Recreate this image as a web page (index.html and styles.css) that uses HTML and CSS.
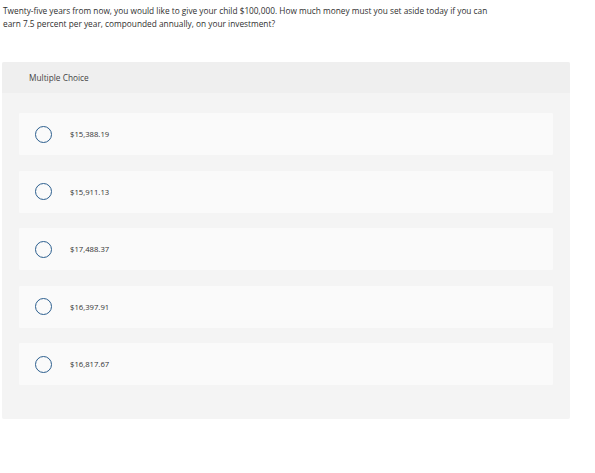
FILE: index.html
```html
<!DOCTYPE html>
<html>
<head>
<meta charset="utf-8">
<link rel="stylesheet" href="styles.css">
</head>
<body>
<p class="question">Twenty-five years from now, you would like to give your child $100,000. How much money must you set aside today if you can earn 7.5 percent per year, compounded annually, on your investment?</p>
<div class="panel">
  <div class="panel-head">Multiple Choice</div>
  <div class="panel-body">
    <div class="option"><span class="radio"></span><span class="label">$15,388.19</span></div>
    <div class="option"><span class="radio"></span><span class="label">$15,911.13</span></div>
    <div class="option"><span class="radio"></span><span class="label">$17,488.37</span></div>
    <div class="option"><span class="radio"></span><span class="label">$16,397.91</span></div>
    <div class="option"><span class="radio"></span><span class="label">$16,817.67</span></div>
  </div>
</div>
</body>
</html>
```
FILE: styles.css
```css
html, body { margin: 0; padding: 0; background: #fff; }
body {
  font-family: "Open Sans", "Liberation Sans", Arial, sans-serif;
  color: #333;
  padding: 4px 25px 0 3px;
}
.question {
  margin: 0;
  width: 490px;
  font-size: 8.3px;
  line-height: 13px;
  color: #2f2f2f;
}
.panel {
  margin: 32px 0 0 -1px;
  width: 568px;
  border-radius: 2px;
  overflow: hidden;
  background: #f4f4f4;
}
.panel-head {
  background: #efefef;
  height: 31px;
  display: flex;
  align-items: center;
  padding-left: 27px;
  font-size: 8.3px;
  color: #444;
}
.panel-body {
  display: flex;
  flex-direction: column;
  gap: 15.5px;
  padding: 20px 17px 34px 17px;
}
.option {
  background: #fafafa;
  height: 42px;
  display: flex;
  align-items: center;
  border-radius: 1px;
}
.radio {
  width: 15px;
  height: 15px;
  border: 1.5px solid #2b5e8e;
  border-radius: 50%;
  margin-left: 16px;
  flex: none;
}
.label {
  margin-left: 18px;
  font-size: 7.7px;
  color: #333;
}
```
